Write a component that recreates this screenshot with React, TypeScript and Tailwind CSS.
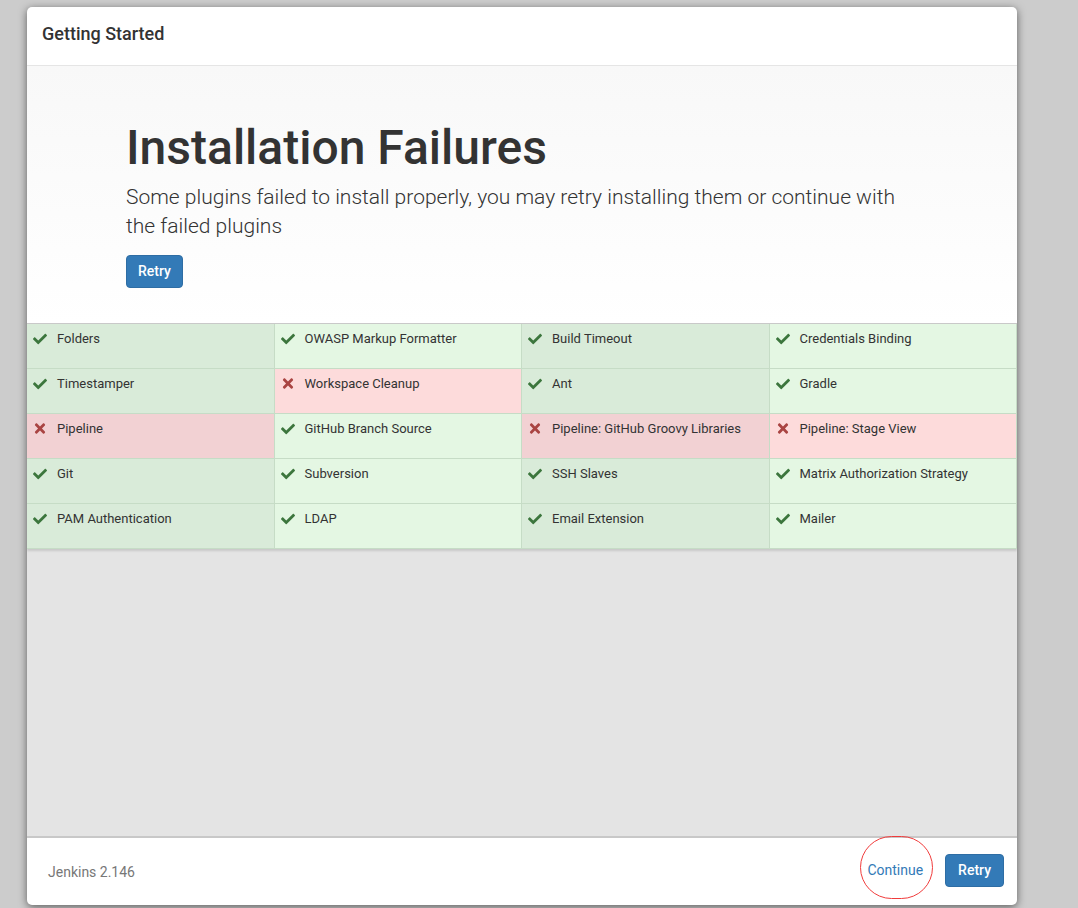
import React from "react";
import { FaCheck, FaTimes } from "react-icons/fa";

type Plugin = { name: string; ok: boolean };

const plugins: Plugin[] = [
  { name: "Folders", ok: true },
  { name: "OWASP Markup Formatter", ok: true },
  { name: "Build Timeout", ok: true },
  { name: "Credentials Binding", ok: true },
  { name: "Timestamper", ok: true },
  { name: "Workspace Cleanup", ok: false },
  { name: "Ant", ok: true },
  { name: "Gradle", ok: true },
  { name: "Pipeline", ok: false },
  { name: "GitHub Branch Source", ok: true },
  { name: "Pipeline: GitHub Groovy Libraries", ok: false },
  { name: "Pipeline: Stage View", ok: false },
  { name: "Git", ok: true },
  { name: "Subversion", ok: true },
  { name: "SSH Slaves", ok: true },
  { name: "Matrix Authorization Strategy", ok: true },
  { name: "PAM Authentication", ok: true },
  { name: "LDAP", ok: true },
  { name: "Email Extension", ok: true },
  { name: "Mailer", ok: true },
];

const cellBg = (p: Plugin, i: number) => {
  const odd = i % 2 === 0;
  if (p.ok) return odd ? "bg-[#d9ebd9]" : "bg-[#e4f7e3]";
  return odd ? "bg-[#f2d1d3]" : "bg-[#fddbdb]";
};

const App = () => {
  return (
    <div
      className="w-[1078px] h-[908px] bg-[#cccccc] overflow-hidden pt-[7px] pl-[27px]"
      style={{ fontFamily: "Roboto, 'Liberation Sans', sans-serif" }}
    >
      <div className="w-[990px] h-[898px] bg-white rounded-[5px] shadow-[0_2px_8px_rgba(0,0,0,0.55)] flex flex-col overflow-hidden">
        {/* header */}
        <div className="h-[59px] shrink-0 border-b border-[#e5e5e5] flex items-center px-[15px] pb-[6px]">
          <h4 className="text-[18px] font-medium text-[#333]">Getting Started</h4>
        </div>

        {/* body */}
        <div className="flex-1 flex flex-col bg-[#e4e4e4]">
          <div className="bg-gradient-to-b from-[#f8f8f8] to-white pt-[55px] pb-[35px] pl-[99px]">
            <h1 className="text-[48px] leading-[53px] font-medium text-[#333]">
              Installation Failures
            </h1>
            <p className="mt-[9px] w-[790px] text-[21px] leading-[29px] font-light text-[#333]">
              Some plugins failed to install properly, you may retry installing them or continue with the failed plugins
            </p>
            <button className="mt-[14px] h-[33px] px-[11px] rounded-[4px] bg-[#337ab7] border border-[#2e6da4] text-white text-[14px] font-medium">
              Retry
            </button>
          </div>

          <div className="grid grid-cols-4 border-t border-[#c9c9c9] shadow-[0_2px_2px_rgba(0,0,0,0.12)]">
            {plugins.map((p, i) => (
              <div
                key={p.name}
                className={`h-[45px] flex items-start gap-[10px] pl-[6px] pt-[5px] border-b border-r border-[#c6dcc6] text-[13px] leading-[19px] text-[#333] ${cellBg(p, i % 4)}`}
              >
                <span className="w-[14px] h-[19px] flex items-center justify-center">
                  {p.ok ? (
                    <FaCheck className="text-[#3c763d] w-[14px] h-[14px]" />
                  ) : (
                    <FaTimes className="text-[#a94442] w-[14px] h-[15px]" />
                  )}
                </span>
                <span>{p.name}</span>
              </div>
            ))}
          </div>
        </div>

        {/* footer */}
        <div className="h-[69px] shrink-0 border-t-2 border-[#c8c8c8] flex items-center justify-between pl-[21px] pr-[13px]">
          <span className="mt-[2px] text-[14px] text-[#777]">Jenkins 2.146</span>
          <div className="flex items-center gap-[10px] mb-[3px]">
            <div className="relative">
              <button className="h-[33px] px-[12px] text-[14px] text-[#337ab7]">Continue</button>
              <span className="absolute left-[5px] top-[-18px] w-[73px] h-[63px] rounded-full border border-[#f03c3c] pointer-events-none" />
            </div>
            <button className="h-[33px] px-[12px] rounded-[4px] bg-[#337ab7] border border-[#2e6da4] text-white text-[14px] font-medium">
              Retry
            </button>
          </div>
        </div>
      </div>
    </div>
  );
};

export default App;
